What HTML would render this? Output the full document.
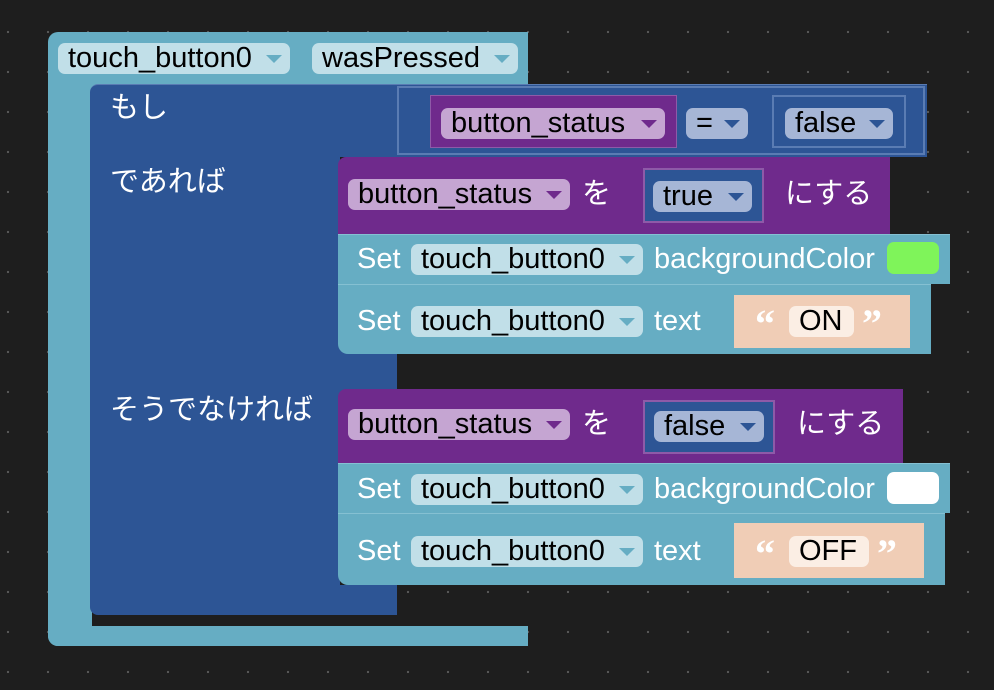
<!DOCTYPE html>
<html><head><meta charset="utf-8"><style>
*{margin:0;padding:0;box-sizing:border-box}
body{width:994px;height:690px;overflow:hidden;background:#1e1e1e;position:relative;
background-image:radial-gradient(circle,#5a5a5a 1px,transparent 1.3px);background-size:40px 40px;background-position:-12px 12px;
font-family:"Liberation Sans","Noto Sans CJK JP",sans-serif;font-size:29px}
.a{position:absolute}
.teal{background:#66adc3}
.blue{background:#2d5595}
.pur{background:#6f2a8c}
.f{position:absolute;height:31px;border-radius:7px;color:#000;line-height:31px;padding:0 8px 0 10px;white-space:nowrap;display:flex;justify-content:space-between;align-items:center}
.ft{background:#c1dfe8}.fp{background:#c5a5d2}.fb{background:#a6b6d6}
.ar{display:inline-block;width:0;height:0;border-left:8px solid transparent;border-right:8px solid transparent;margin-left:4px}
.ft .ar{border-top:8px solid #66adc3}.fp .ar{border-top:8px solid #6f2a8c}.fb .ar{border-top:8px solid #2d5595}
.w{position:absolute;color:#fff;white-space:nowrap;line-height:31px}
.q{position:absolute;color:#fff;font-family:"Liberation Serif",serif;font-weight:bold;font-size:40px;line-height:40px}
</style></head><body>
<div class="a teal" style="left:48px;top:32px;width:480px;height:56px;border-radius:10px 0 0 0"></div>
<div class="a teal" style="left:48px;top:80px;width:44px;height:566px;border-radius:0 0 0 10px"></div>
<div class="a teal" style="left:48px;top:626px;width:480px;height:20px;border-radius:0 0 0 10px"></div>
<div class="f ft" style="left:58px;top:43px;width:232px">touch_button0<span class="ar"></span></div>
<div class="f ft" style="left:312px;top:43px;width:206px">wasPressed<span class="ar"></span></div>
<div class="a blue" style="left:90px;top:84px;width:837px;height:73px;border-radius:8px 0 0 0;border-top:1px solid #5a7cb3"></div>
<div class="a blue" style="left:90px;top:150px;width:250px;height:465px;border-radius:0 0 0 8px"></div>
<div class="a blue" style="left:330px;top:345px;width:67px;height:47px"></div>
<div class="a blue" style="left:330px;top:585px;width:67px;height:30px"></div>
<div class="w" style="left:110px;top:93px">もし</div>
<div class="w" style="left:110px;top:167px">であれば</div>
<div class="w" style="left:110px;top:395px">そうでなければ</div>
<div class="a" style="left:397px;top:86px;width:528px;height:69px;border:2px solid #5a7cb3;background:#2d5595"></div>
<div class="a pur" style="left:430px;top:95px;width:247px;height:53px;border:1px solid #8e5aa8"></div>
<div class="f fp" style="left:441px;top:108px;width:224px">button_status<span class="ar"></span></div>
<div class="f fb" style="left:686px;top:108px;width:62px">=<span class="ar"></span></div>
<div class="a" style="left:772px;top:95px;width:134px;height:53px;border:2px solid #5a7cb3;background:#2d5595"></div>
<div class="f fb" style="left:785px;top:108px;width:108px">false<span class="ar"></span></div>
<div class="a pur" style="left:338px;top:157px;width:552px;height:77px;border-radius:8px 0 0 0"></div>
<div class="f fp" style="left:348px;top:179px;width:222px">button_status<span class="ar"></span></div>
<div class="w" style="left:582px;top:179px">を</div>
<div class="a blue" style="left:643px;top:168px;width:121px;height:55px;border:2px solid #8e5aa8"></div>
<div class="f fb" style="left:653px;top:181px;width:99px">true<span class="ar"></span></div>
<div class="w" style="left:785px;top:179px">にする</div>
<div class="a teal" style="left:338px;top:234px;width:612px;height:50px;border-top:1px solid #85c0d2"></div>
<div class="w" style="left:357px;top:244px">Set</div>
<div class="f ft" style="left:411px;top:244px;width:232px">touch_button0<span class="ar"></span></div>
<div class="w" style="left:654px;top:244px">backgroundColor</div>
<div class="a" style="left:887px;top:242px;width:52px;height:32px;border-radius:7px;background:#7ff45a"></div>
<div class="a teal" style="left:338px;top:284px;width:593px;height:70px;border-radius:0 0 0 10px;border-top:1px solid #85c0d2"></div>
<div class="w" style="left:357px;top:306px">Set</div>
<div class="f ft" style="left:411px;top:306px;width:232px">touch_button0<span class="ar"></span></div>
<div class="w" style="left:654px;top:306px">text</div>
<div class="a" style="left:734px;top:295px;width:176px;height:53px;background:#f0cdb6"></div>
<div class="q" style="left:755px;top:304px">“</div>
<div class="f" style="left:789px;top:306px;width:65px;background:#fbeee4">ON</div>
<div class="q" style="left:862px;top:304px">”</div>
<div class="a pur" style="left:338px;top:389px;width:565px;height:74px;border-radius:8px 0 0 0"></div>
<div class="f fp" style="left:348px;top:409px;width:222px">button_status<span class="ar"></span></div>
<div class="w" style="left:582px;top:409px">を</div>
<div class="a blue" style="left:643px;top:400px;width:132px;height:54px;border:2px solid #8e5aa8"></div>
<div class="f fb" style="left:654px;top:411px;width:110px">false<span class="ar"></span></div>
<div class="w" style="left:797px;top:409px">にする</div>
<div class="a teal" style="left:338px;top:463px;width:612px;height:50px;border-top:1px solid #85c0d2"></div>
<div class="w" style="left:357px;top:474px">Set</div>
<div class="f ft" style="left:411px;top:474px;width:232px">touch_button0<span class="ar"></span></div>
<div class="w" style="left:654px;top:474px">backgroundColor</div>
<div class="a" style="left:887px;top:472px;width:52px;height:32px;border-radius:7px;background:#fff"></div>
<div class="a teal" style="left:338px;top:513px;width:607px;height:72px;border-radius:0 0 0 10px;border-top:1px solid #85c0d2"></div>
<div class="w" style="left:357px;top:536px">Set</div>
<div class="f ft" style="left:411px;top:536px;width:232px">touch_button0<span class="ar"></span></div>
<div class="w" style="left:654px;top:536px">text</div>
<div class="a" style="left:734px;top:523px;width:190px;height:55px;background:#f0cdb6"></div>
<div class="q" style="left:755px;top:534px">“</div>
<div class="f" style="left:789px;top:536px;width:80px;background:#fbeee4">OFF</div>
<div class="q" style="left:877px;top:534px">”</div>
</body></html>
